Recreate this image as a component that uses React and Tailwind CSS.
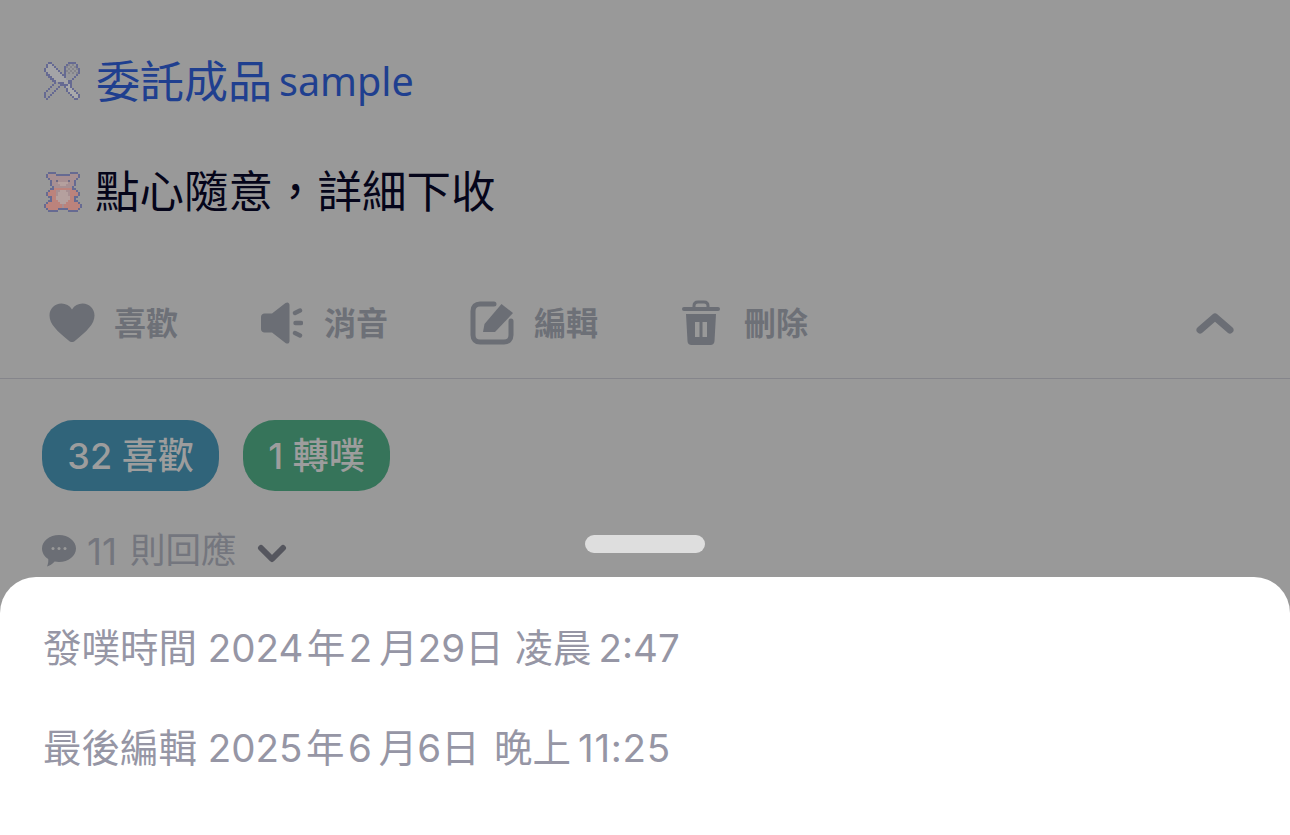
import React from 'react';

const cjk = 'font-["Inter","Noto_Sans_CJK_TC",sans-serif]';

// narrow gaps the phone puts between latin digits and CJK
const thin = '\u2009';
const hair = '\u200A';

const forkRows = [
  '..oo........oooo..',
  '.ohho......ofgfgo.',
  '.ohhho....ofgfgfo.',
  'ohhhhho...ogfgfgfo',
  'ohhhhhho..ofgfgfgo',
  '.ohhhhhho.ogfgfgfo',
  '.oohhhhhhoogggggo.',
  '..oohhhhhhoggggo..',
  '...oohhhhhhgggo...',
  '....oohhhhhhoo....',
  '.....ogooohhoo....',
  '....ogggoooolo....',
  '...ogggo..ollo....',
  '..ogggo....ollo...',
  '.ogggo.....olllo..',
  'ogggo.......olllo.',
  'oggo.........olllo',
  'ogo...........ollo',
  '.o.............oo.',
];

const bearRows = [
  '..oooo.......oooo..',
  '.ommmmooooooommmmo.',
  '.ommmmmmmmmmmmmmmo.',
  '..ommmmmmmmmmmmmo..',
  '...ommemmmmmemmo...',
  '...ommmnnnnnmmmo...',
  '...ommmmnnnmmmmo...',
  '....ommmmmmmmmo....',
  '...oopppppppppoo...',
  '..opppmmnnnmmpppo..',
  '.oppppmnnnnnmppppo.',
  '.oppppmnnnnnmppppo.',
  '..ooppnnnnnnnppoo..',
  '...oppnnnnnnnppo...',
  '..oopppnnnnnpppoo..',
  '.oppppppnnnppppppo.',
  'oppppppppmppppppppo',
  'oppppppppmppppppppo',
  '.opppppooooopppppo.',
  '..ooooo.....ooooo..',
];

const pixelColors = {
  o: '#666a92',
  h: '#a4a4a7',
  g: '#98989b',
  f: '#85858c',
  l: '#a9a9ab',
  m: '#a78f92',
  n: '#b5a09e',
  e: '#6e6a85',
  p: '#bc837c',
};

const PixelIcon = ({ rows, width, height }) => (
  <svg width={width} height={height} viewBox={`0 0 ${width} ${height}`} className="blur-[0.7px] shrink-0">
    {rows.map((row, y) =>
      row.split('').map((c, x) =>
        pixelColors[c] ? <rect key={`${x}-${y}`} x={x * 2} y={y * 2} width="2" height="2" fill={pixelColors[c]} /> : null
      )
    )}
  </svg>
);

const HeartIcon = () => (
  <svg width="46" height="40" viewBox="0 0 46 40">
    <path d="M23 39 C21.8 39 20.8 38.4 19.6 37.4 C8 28 0.5 21 0.5 12.5 C0.5 5.5 5.8 0.5 12.4 0.5 C16.8 0.5 20.6 2.6 23 6.4 C25.4 2.6 29.2 0.5 33.6 0.5 C40.2 0.5 45.5 5.5 45.5 12.5 C45.5 21 38 28 26.4 37.4 C25.2 38.4 24.2 39 23 39 Z" fill="#6b6e75" />
  </svg>
);

const MuteIcon = () => (
  <svg width="42" height="42" viewBox="0 0 42 42">
    <path d="M3.5 11.5 H11 L24.5 1 C26.5 -0.2 28.5 0.6 28.5 3 V39 C28.5 41.4 26.5 42.2 24.5 41 L11 30.5 H3.5 C1.5 30.5 0 29 0 27 V15 C0 13 1.5 11.5 3.5 11.5 Z" fill="#6b6e75" />
    <path d="M34 11 L39 8.5 M34.5 21 H40 M34 31 L39 33.5" stroke="#6b6e75" strokeWidth="4.4" strokeLinecap="round" />
  </svg>
);

const EditIcon = () => (
  <svg width="44" height="44" viewBox="0 0 44 44" fill="none">
    <path d="M24 3 H10 C5.6 3 3 5.6 3 10 V34 C3 38.4 5.6 41 10 41 H34 C38.4 41 41 38.4 41 34 V20" stroke="#6b6e75" strokeWidth="5" strokeLinecap="round" />
    <path d="M14.5 23 L31.5 3 L43 12 L25 31 L13 31 Z" fill="#6b6e75" />
  </svg>
);

const TrashIcon = () => (
  <svg width="38" height="46" viewBox="0 0 38 46" fill="none">
    <path d="M12 8 V6 C12 3.5 13.5 2 16 2 H22 C24.5 2 26 3.5 26 6 V8" stroke="#6b6e75" strokeWidth="3" />
    <rect x="0" y="7" width="38" height="4" rx="2" fill="#6b6e75" />
    <path fillRule="evenodd" d="M4 14 H34 L32.5 41 C32.4 43.8 30.8 45 28.5 45 H9.5 C7.2 45 5.6 43.8 5.5 41 Z M13 22 V37 H17.5 V22 Z M20.5 22 V37 H25 V22 Z" fill="#6b6e75" />
  </svg>
);

const ActionItem = ({ icon, label, iconBox }) => (
  <div className="flex items-center">
    <div className={`flex items-center ${iconBox}`}>{icon}</div>
    <span className="text-[32px] leading-none font-semibold text-[#6d7077] translate-y-px">{label}</span>
  </div>
);

export default function App() {
  return (
    <div className={`relative w-[1290px] h-[835px] overflow-hidden bg-[#999999] ${cjk}`}>
      {/* post */}
      <div className="flex flex-col pt-[60px]">
        <div className="flex items-center h-[44px] pl-[44px] gap-[15px]">
          <PixelIcon rows={forkRows} width={37} height={40} />
          <div className="flex items-baseline text-[#1f3f8f]">
            <span className="text-[44px] leading-none">委託成品</span>
            <span className={'ml-[7px] text-[39.5px] leading-none font-["Noto_Sans",sans-serif] -translate-y-[2px]'}>sample</span>
          </div>
        </div>
        <div className="flex items-center h-[44px] mt-[66px] pl-[44px] gap-[13px]">
          <PixelIcon rows={bearRows} width={38} height={40} />
          <span className="text-[44.5px] leading-none text-[#05051a]">點心隨意，詳細下收</span>
        </div>

        <div className="flex items-center justify-between h-[46px] mt-[86px] pl-[49px] pr-[56px]">
          <div className="flex items-center">
            <ActionItem icon={<HeartIcon />} label="喜歡" iconBox="w-[65px]" />
            <div className="w-[83px]" />
            <ActionItem icon={<MuteIcon />} label="消音" iconBox="w-[63px]" />
            <div className="w-[82px]" />
            <ActionItem icon={<EditIcon />} label="編輯" iconBox="w-[64px]" />
            <div className="w-[84px]" />
            <ActionItem icon={<TrashIcon />} label="刪除" iconBox="w-[62px]" />
          </div>
          <svg width="38" height="22" viewBox="0 0 38 22" fill="none">
            <path d="M4 18 L19 5 L34 18" stroke="#6b6e75" strokeWidth="7" strokeLinecap="round" strokeLinejoin="round" />
          </svg>
        </div>
        <div className="mt-[32px] h-px bg-[#85858b]" />

        <div className="flex gap-[24px] mt-[41px] pl-[42px]">
          <div className="flex items-center justify-center w-[177px] h-[71px] rounded-[32px] bg-[#30647a] text-[36px] font-medium text-[#9d9d9d]">32 喜歡</div>
          <div className="flex items-center justify-center w-[147px] h-[71px] rounded-[32px] bg-[#36745a] text-[36px] font-medium text-[#9d9d9d]">1 轉噗</div>
        </div>

        <div className="flex items-center h-[40px] mt-[40px] pl-[42px] text-[37px] leading-none text-[#74767e]">
          <svg width="34" height="34" viewBox="0 0 34 34">
            <path d="M17 1 C26.4 1 34 7.2 34 14.5 C34 22 26.4 28 17 28 C15.5 28 14 27.8 12.6 27.5 C10.5 30 7.5 32 5 32.5 C6 30.5 6.6 27.5 6.2 25 C2.4 22.5 0 18.8 0 14.5 C0 7.2 7.6 1 17 1 Z" fill="#6b6e75" />
            <circle cx="11" cy="14.5" r="1.5" fill="#999999" />
            <circle cx="17" cy="14.5" r="1.5" fill="#999999" />
            <circle cx="23" cy="14.5" r="1.5" fill="#999999" />
          </svg>
          <span className="ml-[11px]">11</span>
          <span className="ml-[13px] text-[35.5px]">則回應</span>
          <svg width="30" height="20" viewBox="0 0 30 20" fill="none" className="ml-[20px] mt-[6px]">
            <path d="M4 4 L15 15 L26 4" stroke="#55565e" strokeWidth="6" strokeLinecap="round" strokeLinejoin="round" />
          </svg>
        </div>
      </div>

      {/* bottom sheet */}
      <div className="absolute left-[585px] top-[535px] w-[120px] h-[18px] rounded-[9px] bg-[#dedede]" />
      <div className="absolute inset-x-0 top-[577px] bottom-0 rounded-t-[36px] bg-white pl-[43px] pt-[50px] text-[#9696a5] text-[38.5px]">
        <div className="leading-[42px] whitespace-nowrap">{`發噗時間 2024${hair}年${hair}2${thin}月29日 凌晨${thin}2:47`}</div>
        <div className="mt-[58px] leading-[42px] whitespace-nowrap">
          {`最後編輯 2025${hair}年${hair}6${thin}月6日${hair} 晚上${thin}`}
          <span className="tracking-[0.7px]">11:25</span>
        </div>
      </div>
    </div>
  );
}
